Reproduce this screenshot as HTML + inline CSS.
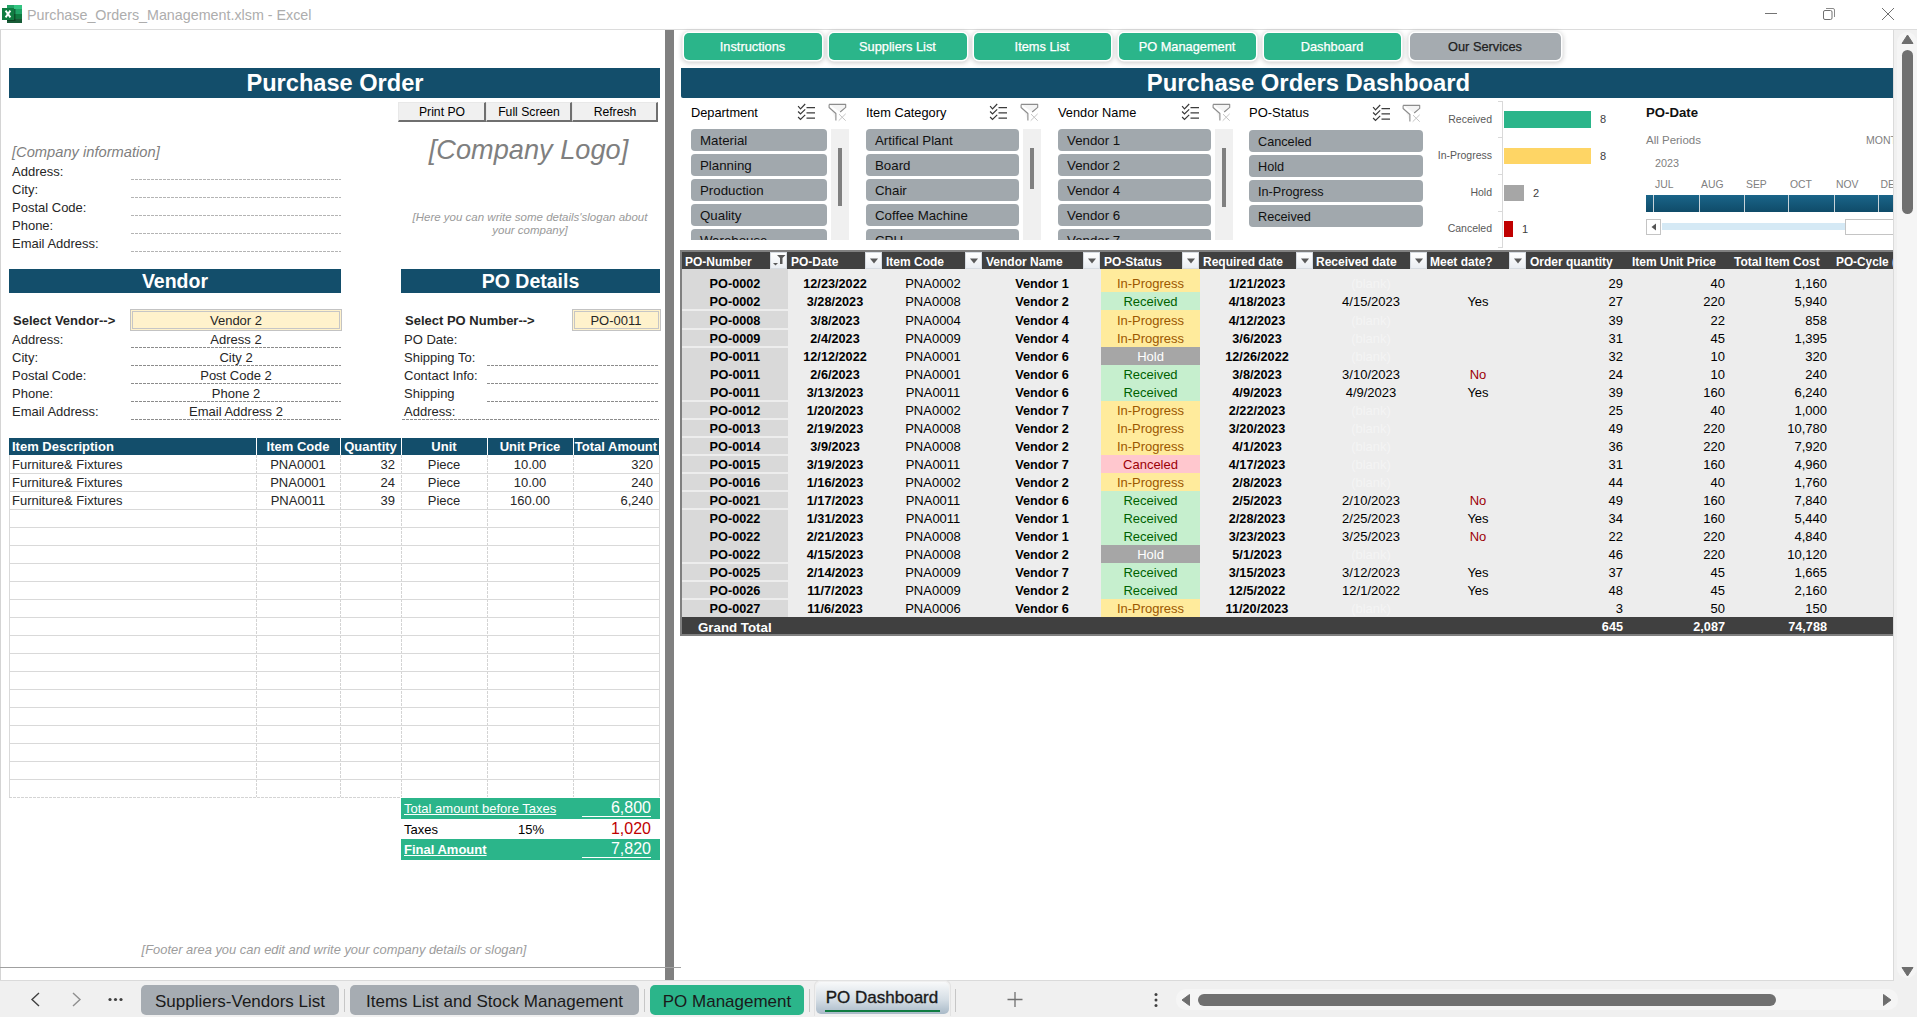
<!DOCTYPE html><html><head><meta charset="utf-8"><style>
*{margin:0;padding:0;box-sizing:border-box}
html,body{width:1917px;height:1017px;overflow:hidden;background:#fff;position:relative;font-family:"Liberation Sans",sans-serif}
.t{position:absolute;white-space:nowrap;overflow:visible}
</style></head><body>
<div style="position:absolute;left:0px;top:29px;width:1917px;height:1px;background:#dcdcdc"></div>
<svg style="position:absolute;left:2px;top:5px" width="21" height="19" viewBox="0 0 21 19">
<rect x="5" y="0" width="15" height="18" fill="#21a366"/>
<rect x="12" y="0" width="8" height="4" fill="#33c481"/>
<rect x="12" y="4" width="8" height="5" fill="#21a366"/>
<rect x="5" y="9" width="15" height="4.5" fill="#107c41"/>
<rect x="5" y="13.5" width="15" height="4.5" fill="#185c37"/>
<rect x="5" y="4" width="8.5" height="12" fill="#0a2e18" opacity="0.55"/>
<rect x="0" y="3" width="12" height="12" fill="#107c41"/>
<path d="M3.6 5.6 L8.4 12.4 M8.4 5.6 L3.6 12.4" stroke="#fff" stroke-width="1.9"/>
</svg>
<div class="t" style="left:27.00px;top:5.16px;width:600px;height:20px;line-height:20px;font-size:14.3px;color:#adadad;font-weight:normal;text-align:left;">Purchase_Orders_Management.xlsm - Excel</div>
<div style="position:absolute;left:1765px;top:13px;width:12px;height:1px;background:#747474"></div>
<svg style="position:absolute;left:1820px;top:6px" width="18" height="16" viewBox="0 0 18 16">
<rect x="3.5" y="4.5" width="8.5" height="9" rx="1.5" fill="none" stroke="#707070" stroke-width="1"/>
<path d="M6 2.5 H13 A1.5 1.5 0 0 1 14.5 4 V11" fill="none" stroke="#8a8a8a" stroke-width="1"/>
</svg>
<svg style="position:absolute;left:1880px;top:6px" width="16" height="16" viewBox="0 0 16 16">
<path d="M2 2 L14 14 M14 2 L2 14" stroke="#707070" stroke-width="1"/>
</svg>
<div style="position:absolute;left:0px;top:30px;width:1px;height:950px;background:#d4d4d4"></div>
<div style="position:absolute;left:665px;top:30px;width:9px;height:950px;background:#808080"></div>
<div style="position:absolute;left:0px;top:967px;width:681px;height:1px;background:#a0a0a0"></div>
<div style="position:absolute;left:674px;top:967px;width:7px;height:1px;background:#a0a0a0"></div>
<div style="position:absolute;left:1893px;top:30px;width:1px;height:951px;background:#dadada"></div>
<div style="position:absolute;left:0px;top:980px;width:1894px;height:1px;background:#dadada"></div>
<div style="position:absolute;left:1894px;top:30px;width:23px;height:951px;background:#f0f0f0"></div>
<div style="position:absolute;left:1897px;top:32px;width:20px;height:946px;background:#f5f5f5;border-radius:10px"></div>
<svg style="position:absolute;left:1900px;top:33px" width="15" height="12" viewBox="0 0 15 12"><path d="M7.5 2 L13 10.5 H2 Z" fill="#6e6e6e" stroke="#6e6e6e" stroke-width="1" stroke-linejoin="round"/></svg>
<div style="position:absolute;left:1902px;top:50px;width:11px;height:164px;background:#707070;border-radius:6px"></div>
<svg style="position:absolute;left:1900px;top:966px" width="15" height="12" viewBox="0 0 15 12"><path d="M7.5 10 L13 1.5 H2 Z" fill="#6e6e6e" stroke="#6e6e6e" stroke-width="1" stroke-linejoin="round"/></svg>
<div style="position:absolute;left:0px;top:981px;width:1917px;height:36px;background:#f0f0f0"></div>
<svg style="position:absolute;left:28px;top:990px" width="100" height="20" viewBox="0 0 100 20">
<path d="M11 3 L4 9.5 L11 16" stroke="#404040" stroke-width="1.4" fill="none"/>
<path d="M45 3 L52 9.5 L45 16" stroke="#8f8f8f" stroke-width="1.4" fill="none"/>
<circle cx="82" cy="9.5" r="1.6" fill="#404040"/><circle cx="87.5" cy="9.5" r="1.6" fill="#404040"/><circle cx="93" cy="9.5" r="1.6" fill="#404040"/>
</svg>
<div style="position:absolute;left:141px;top:985px;width:198px;height:30px;background:#a6acb2;border-radius:5px"></div>
<div class="t" style="left:121.00px;top:990.00px;width:238px;height:23px;line-height:23px;font-size:17px;color:#1a1a1a;font-weight:normal;text-align:center;">Suppliers-Vendors List</div>
<div style="position:absolute;left:344px;top:989px;width:1px;height:23px;background:#c6c6c6"></div>
<div style="position:absolute;left:350px;top:985px;width:289px;height:30px;background:#a6acb2;border-radius:5px"></div>
<div class="t" style="left:330.00px;top:990.00px;width:329px;height:23px;line-height:23px;font-size:17px;color:#1a1a1a;font-weight:normal;text-align:center;">Items List and Stock Management</div>
<div style="position:absolute;left:644px;top:989px;width:1px;height:23px;background:#c6c6c6"></div>
<div style="position:absolute;left:650px;top:985px;width:154px;height:30px;background:#2bb58a;border-radius:5px"></div>
<div class="t" style="left:630.00px;top:990.00px;width:194px;height:23px;line-height:23px;font-size:17px;color:#1a1a1a;font-weight:normal;text-align:center;">PO Management</div>
<div style="position:absolute;left:809px;top:989px;width:1px;height:23px;background:#c6c6c6"></div>
<div style="position:absolute;left:814px;top:980px;width:137px;height:36px;background:#f0f0f0;border:1px solid #e2e2e2;border-bottom:none;border-radius:6px 6px 0 0"></div>
<div style="position:absolute;left:816px;top:982px;width:133px;height:32px;background:linear-gradient(#f8f9fa,#d5dee5 55%,#a9bac8);border-radius:5px"></div>
<div class="t" style="left:802.00px;top:986.20px;width:160px;height:23px;line-height:23px;font-size:17px;color:#1a1a1a;font-weight:normal;text-align:center;-webkit-text-stroke:0.35px #1a1a1a">PO Dashboard</div>
<div style="position:absolute;left:825px;top:1010px;width:115px;height:2px;background:#107c41"></div>
<div style="position:absolute;left:955px;top:989px;width:1px;height:23px;background:#c6c6c6"></div>
<svg style="position:absolute;left:1005px;top:990px" width="20" height="20" viewBox="0 0 20 20"><path d="M10 2 V17 M2.5 9.5 H17.5" stroke="#707070" stroke-width="1.3"/></svg>
<svg style="position:absolute;left:1150px;top:990px" width="12" height="20" viewBox="0 0 12 20"><circle cx="6" cy="4.5" r="1.5" fill="#404040"/><circle cx="6" cy="10" r="1.5" fill="#404040"/><circle cx="6" cy="15.5" r="1.5" fill="#404040"/></svg>
<div style="position:absolute;left:1176px;top:989px;width:722px;height:21px;background:#f5f5f5;border-radius:10px"></div>
<svg style="position:absolute;left:1178px;top:992px" width="16" height="16" viewBox="0 0 16 16"><path d="M4 8 L11.5 2.5 V13.5 Z" fill="#6e6e6e" stroke="#6e6e6e" stroke-width="1" stroke-linejoin="round"/></svg>
<div style="position:absolute;left:1198px;top:994px;width:578px;height:12px;background:#707070;border-radius:6px"></div>
<svg style="position:absolute;left:1879px;top:992px" width="16" height="16" viewBox="0 0 16 16"><path d="M12 8 L4.5 2.5 V13.5 Z" fill="#6e6e6e" stroke="#6e6e6e" stroke-width="1" stroke-linejoin="round"/></svg>
<div style="position:absolute;left:9px;top:68px;width:651px;height:30px;background:#134e6b"></div>
<div class="t" style="left:9.50px;top:66.87px;width:651px;height:33px;line-height:33px;font-size:23.6px;color:#fff;font-weight:bold;text-align:center;">Purchase Order</div>
<div style="position:absolute;left:398px;top:102px;width:88px;height:20px;background:#f0f0f0;border-right:2px solid #6f6f6f;border-bottom:2px solid #6f6f6f;border-left:1px solid #e8e8e8;border-top:1px solid #e8e8e8"></div>
<div class="t" style="left:398.00px;top:104.14px;width:88px;height:17px;line-height:17px;font-size:12.2px;color:#000;font-weight:normal;text-align:center;">Print PO</div>
<div style="position:absolute;left:486px;top:102px;width:86px;height:20px;background:#f0f0f0;border-right:2px solid #6f6f6f;border-bottom:2px solid #6f6f6f;border-left:1px solid #e8e8e8;border-top:1px solid #e8e8e8"></div>
<div class="t" style="left:486.00px;top:104.14px;width:86px;height:17px;line-height:17px;font-size:12.2px;color:#000;font-weight:normal;text-align:center;">Full Screen</div>
<div style="position:absolute;left:572px;top:102px;width:86px;height:20px;background:#f0f0f0;border-right:2px solid #6f6f6f;border-bottom:2px solid #6f6f6f;border-left:1px solid #e8e8e8;border-top:1px solid #e8e8e8"></div>
<div class="t" style="left:572.00px;top:104.14px;width:86px;height:17px;line-height:17px;font-size:12.2px;color:#000;font-weight:normal;text-align:center;">Refresh</div>
<div class="t" style="left:12.00px;top:142.17px;width:400px;height:20px;line-height:20px;font-size:14.7px;color:#7f7f7f;font-weight:normal;text-align:left;font-style:italic">[Company information]</div>
<div class="t" style="left:12.00px;top:162.95px;width:400px;height:18px;line-height:18px;font-size:13px;color:#262626;font-weight:normal;text-align:left;">Address:</div>
<div style="position:absolute;left:131px;top:179px;width:210px;height:1px;background:repeating-linear-gradient(90deg,#b4b4b4 0 3px,transparent 3px 4px)"></div>
<div class="t" style="left:12.00px;top:180.95px;width:400px;height:18px;line-height:18px;font-size:13px;color:#262626;font-weight:normal;text-align:left;">City:</div>
<div style="position:absolute;left:131px;top:197px;width:210px;height:1px;background:repeating-linear-gradient(90deg,#b4b4b4 0 3px,transparent 3px 4px)"></div>
<div class="t" style="left:12.00px;top:198.95px;width:400px;height:18px;line-height:18px;font-size:13px;color:#262626;font-weight:normal;text-align:left;">Postal Code:</div>
<div style="position:absolute;left:131px;top:215px;width:210px;height:1px;background:repeating-linear-gradient(90deg,#b4b4b4 0 3px,transparent 3px 4px)"></div>
<div class="t" style="left:12.00px;top:216.95px;width:400px;height:18px;line-height:18px;font-size:13px;color:#262626;font-weight:normal;text-align:left;">Phone:</div>
<div style="position:absolute;left:131px;top:233px;width:210px;height:1px;background:repeating-linear-gradient(90deg,#b4b4b4 0 3px,transparent 3px 4px)"></div>
<div class="t" style="left:12.00px;top:234.95px;width:400px;height:18px;line-height:18px;font-size:13px;color:#262626;font-weight:normal;text-align:left;">Email Address:</div>
<div style="position:absolute;left:131px;top:251px;width:210px;height:1px;background:repeating-linear-gradient(90deg,#b4b4b4 0 3px,transparent 3px 4px)"></div>
<div class="t" style="left:378.50px;top:131.11px;width:300px;height:38px;line-height:38px;font-size:27.2px;color:#7f7f7f;font-weight:normal;text-align:center;font-style:italic">[Company Logo]</div>
<div class="t" style="left:380.00px;top:208.83px;width:300px;height:16px;line-height:16px;font-size:11.5px;color:#9a9a9a;font-weight:normal;text-align:center;font-style:italic;letter-spacing:0px">[Here you can write some details'slogan about</div>
<div class="t" style="left:380.00px;top:222.43px;width:300px;height:16px;line-height:16px;font-size:11.5px;color:#9a9a9a;font-weight:normal;text-align:center;font-style:italic;letter-spacing:0px">your company]</div>
<div style="position:absolute;left:9px;top:269px;width:332px;height:24px;background:#134e6b"></div>
<div class="t" style="left:9.00px;top:268.22px;width:332px;height:27px;line-height:27px;font-size:19.5px;color:#fff;font-weight:bold;text-align:center;">Vendor</div>
<div style="position:absolute;left:401px;top:269px;width:259px;height:24px;background:#134e6b"></div>
<div class="t" style="left:401.00px;top:268.22px;width:259px;height:27px;line-height:27px;font-size:19.5px;color:#fff;font-weight:bold;text-align:center;">PO Details</div>
<div class="t" style="left:13.00px;top:311.65px;width:400px;height:18px;line-height:18px;font-size:13px;color:#262626;font-weight:bold;text-align:left;">Select Vendor--&gt;</div>
<div style="position:absolute;left:130px;top:309px;width:212px;height:22px;background:#fff2cc;border:1px solid #c3c3c3;box-shadow:inset 0 0 0 1px #fff2cc, inset 0 0 0 2px #c6c6c6"></div>
<div class="t" style="left:136.00px;top:311.65px;width:200px;height:18px;line-height:18px;font-size:13px;color:#262626;font-weight:normal;text-align:center;">Vendor 2</div>
<div class="t" style="left:12.00px;top:330.65px;width:400px;height:18px;line-height:18px;font-size:13px;color:#262626;font-weight:normal;text-align:left;">Address:</div>
<div class="t" style="left:131.00px;top:330.65px;width:210px;height:18px;line-height:18px;font-size:13px;color:#262626;font-weight:normal;text-align:center;">Adress 2</div>
<div style="position:absolute;left:131px;top:347px;width:210px;height:1px;background:repeating-linear-gradient(90deg,#8c8c8c 0 3px,transparent 3px 4px)"></div>
<div class="t" style="left:12.00px;top:348.65px;width:400px;height:18px;line-height:18px;font-size:13px;color:#262626;font-weight:normal;text-align:left;">City:</div>
<div class="t" style="left:131.00px;top:348.65px;width:210px;height:18px;line-height:18px;font-size:13px;color:#262626;font-weight:normal;text-align:center;">City 2</div>
<div style="position:absolute;left:131px;top:365px;width:210px;height:1px;background:repeating-linear-gradient(90deg,#8c8c8c 0 3px,transparent 3px 4px)"></div>
<div class="t" style="left:12.00px;top:366.65px;width:400px;height:18px;line-height:18px;font-size:13px;color:#262626;font-weight:normal;text-align:left;">Postal Code:</div>
<div class="t" style="left:131.00px;top:366.65px;width:210px;height:18px;line-height:18px;font-size:13px;color:#262626;font-weight:normal;text-align:center;">Post Code 2</div>
<div style="position:absolute;left:131px;top:383px;width:210px;height:1px;background:repeating-linear-gradient(90deg,#8c8c8c 0 3px,transparent 3px 4px)"></div>
<div class="t" style="left:12.00px;top:384.65px;width:400px;height:18px;line-height:18px;font-size:13px;color:#262626;font-weight:normal;text-align:left;">Phone:</div>
<div class="t" style="left:131.00px;top:384.65px;width:210px;height:18px;line-height:18px;font-size:13px;color:#262626;font-weight:normal;text-align:center;">Phone 2</div>
<div style="position:absolute;left:131px;top:401px;width:210px;height:1px;background:repeating-linear-gradient(90deg,#8c8c8c 0 3px,transparent 3px 4px)"></div>
<div class="t" style="left:12.00px;top:402.65px;width:400px;height:18px;line-height:18px;font-size:13px;color:#262626;font-weight:normal;text-align:left;">Email Address:</div>
<div class="t" style="left:131.00px;top:402.65px;width:210px;height:18px;line-height:18px;font-size:13px;color:#262626;font-weight:normal;text-align:center;">Email Address 2</div>
<div style="position:absolute;left:131px;top:419px;width:210px;height:1px;background:repeating-linear-gradient(90deg,#8c8c8c 0 3px,transparent 3px 4px)"></div>
<div class="t" style="left:405.00px;top:311.65px;width:400px;height:18px;line-height:18px;font-size:13px;color:#262626;font-weight:bold;text-align:left;">Select PO Number--&gt;</div>
<div style="position:absolute;left:572px;top:309px;width:89px;height:22px;background:#fff2cc;border:1px solid #c3c3c3;box-shadow:inset 0 0 0 1px #fff2cc, inset 0 0 0 2px #c6c6c6"></div>
<div class="t" style="left:572.00px;top:311.65px;width:88px;height:18px;line-height:18px;font-size:13px;color:#262626;font-weight:normal;text-align:center;">PO-0011</div>
<div class="t" style="left:404.00px;top:330.65px;width:400px;height:18px;line-height:18px;font-size:13px;color:#262626;font-weight:normal;text-align:left;">PO Date:</div>
<div class="t" style="left:404.00px;top:348.65px;width:400px;height:18px;line-height:18px;font-size:13px;color:#262626;font-weight:normal;text-align:left;">Shipping To:</div>
<div class="t" style="left:404.00px;top:366.65px;width:400px;height:18px;line-height:18px;font-size:13px;color:#262626;font-weight:normal;text-align:left;">Contact Info:</div>
<div class="t" style="left:404.00px;top:384.65px;width:400px;height:18px;line-height:18px;font-size:13px;color:#262626;font-weight:normal;text-align:left;">Shipping</div>
<div class="t" style="left:404.00px;top:402.65px;width:400px;height:18px;line-height:18px;font-size:13px;color:#262626;font-weight:normal;text-align:left;">Address:</div>
<div style="position:absolute;left:487px;top:365px;width:172px;height:1px;background:repeating-linear-gradient(90deg,#8c8c8c 0 3px,transparent 3px 4px)"></div>
<div style="position:absolute;left:487px;top:383px;width:172px;height:1px;background:repeating-linear-gradient(90deg,#8c8c8c 0 3px,transparent 3px 4px)"></div>
<div style="position:absolute;left:487px;top:401px;width:172px;height:1px;background:repeating-linear-gradient(90deg,#8c8c8c 0 3px,transparent 3px 4px)"></div>
<div style="position:absolute;left:402px;top:419px;width:257px;height:1px;background:repeating-linear-gradient(90deg,#8c8c8c 0 3px,transparent 3px 4px)"></div>
<div style="position:absolute;left:9px;top:438px;width:650px;height:17px;background:#134e6b"></div>
<div style="position:absolute;left:256px;top:438px;width:1px;height:17px;background:#ffffff"></div>
<div style="position:absolute;left:340px;top:438px;width:1px;height:17px;background:#ffffff"></div>
<div style="position:absolute;left:401px;top:438px;width:1px;height:17px;background:#ffffff"></div>
<div style="position:absolute;left:487px;top:438px;width:1px;height:17px;background:#ffffff"></div>
<div style="position:absolute;left:573px;top:438px;width:1px;height:17px;background:#ffffff"></div>
<div class="t" style="left:12.00px;top:438.15px;width:400px;height:18px;line-height:18px;font-size:13px;color:#fff;font-weight:bold;text-align:left;">Item Description</div>
<div class="t" style="left:251.00px;top:438.15px;width:94px;height:18px;line-height:18px;font-size:13px;color:#fff;font-weight:bold;text-align:center;">Item Code</div>
<div class="t" style="left:335.00px;top:438.15px;width:71px;height:18px;line-height:18px;font-size:13px;color:#fff;font-weight:bold;text-align:center;">Quantity</div>
<div class="t" style="left:396.00px;top:438.15px;width:96px;height:18px;line-height:18px;font-size:13px;color:#fff;font-weight:bold;text-align:center;">Unit</div>
<div class="t" style="left:482.00px;top:438.15px;width:96px;height:18px;line-height:18px;font-size:13px;color:#fff;font-weight:bold;text-align:center;">Unit Price</div>
<div class="t" style="left:568.00px;top:438.15px;width:96px;height:18px;line-height:18px;font-size:13px;color:#fff;font-weight:bold;text-align:center;">Total Amount</div>
<div style="position:absolute;left:9px;top:455px;width:1px;height:342px;background:#d9d9d9"></div>
<div style="position:absolute;left:659px;top:455px;width:1px;height:342px;background:#d9d9d9"></div>
<div style="position:absolute;left:256px;top:455px;width:1px;height:342px;background:repeating-linear-gradient(180deg,#d4d4d4 0 3px,transparent 3px 4px)"></div>
<div style="position:absolute;left:340px;top:455px;width:1px;height:342px;background:repeating-linear-gradient(180deg,#d4d4d4 0 3px,transparent 3px 4px)"></div>
<div style="position:absolute;left:401px;top:455px;width:1px;height:342px;background:repeating-linear-gradient(180deg,#d4d4d4 0 3px,transparent 3px 4px)"></div>
<div style="position:absolute;left:487px;top:455px;width:1px;height:342px;background:repeating-linear-gradient(180deg,#d4d4d4 0 3px,transparent 3px 4px)"></div>
<div style="position:absolute;left:573px;top:455px;width:1px;height:342px;background:repeating-linear-gradient(180deg,#d4d4d4 0 3px,transparent 3px 4px)"></div>
<div style="position:absolute;left:9px;top:473px;width:650px;height:1px;background:#d9d9d9"></div>
<div style="position:absolute;left:9px;top:491px;width:650px;height:1px;background:#d9d9d9"></div>
<div style="position:absolute;left:9px;top:509px;width:650px;height:1px;background:#d9d9d9"></div>
<div style="position:absolute;left:9px;top:527px;width:650px;height:1px;background:#d9d9d9"></div>
<div style="position:absolute;left:9px;top:545px;width:650px;height:1px;background:#d9d9d9"></div>
<div style="position:absolute;left:9px;top:563px;width:650px;height:1px;background:#d9d9d9"></div>
<div style="position:absolute;left:9px;top:581px;width:650px;height:1px;background:#d9d9d9"></div>
<div style="position:absolute;left:9px;top:599px;width:650px;height:1px;background:#d9d9d9"></div>
<div style="position:absolute;left:9px;top:617px;width:650px;height:1px;background:#d9d9d9"></div>
<div style="position:absolute;left:9px;top:635px;width:650px;height:1px;background:#d9d9d9"></div>
<div style="position:absolute;left:9px;top:653px;width:650px;height:1px;background:#d9d9d9"></div>
<div style="position:absolute;left:9px;top:671px;width:650px;height:1px;background:#d9d9d9"></div>
<div style="position:absolute;left:9px;top:689px;width:650px;height:1px;background:#d9d9d9"></div>
<div style="position:absolute;left:9px;top:707px;width:650px;height:1px;background:#d9d9d9"></div>
<div style="position:absolute;left:9px;top:725px;width:650px;height:1px;background:#d9d9d9"></div>
<div style="position:absolute;left:9px;top:743px;width:650px;height:1px;background:#d9d9d9"></div>
<div style="position:absolute;left:9px;top:761px;width:650px;height:1px;background:#d9d9d9"></div>
<div style="position:absolute;left:9px;top:779px;width:650px;height:1px;background:#d9d9d9"></div>
<div style="position:absolute;left:9px;top:797px;width:392px;height:1px;background:repeating-linear-gradient(90deg,#d4d4d4 0 3px,transparent 3px 4px)"></div>
<div class="t" style="left:12.00px;top:456.15px;width:400px;height:18px;line-height:18px;font-size:13px;color:#262626;font-weight:normal;text-align:left;">Furniture&amp; Fixtures</div>
<div class="t" style="left:256.00px;top:456.15px;width:84px;height:18px;line-height:18px;font-size:13px;color:#262626;font-weight:normal;text-align:center;">PNA0001</div>
<div class="t" style="left:335.00px;top:456.15px;width:60px;height:18px;line-height:18px;font-size:13px;color:#262626;font-weight:normal;text-align:right;">32</div>
<div class="t" style="left:401.00px;top:456.15px;width:86px;height:18px;line-height:18px;font-size:13px;color:#262626;font-weight:normal;text-align:center;">Piece</div>
<div class="t" style="left:487.00px;top:456.15px;width:86px;height:18px;line-height:18px;font-size:13px;color:#262626;font-weight:normal;text-align:center;">10.00</div>
<div class="t" style="left:573.00px;top:456.15px;width:80px;height:18px;line-height:18px;font-size:13px;color:#262626;font-weight:normal;text-align:right;">320</div>
<div class="t" style="left:12.00px;top:474.15px;width:400px;height:18px;line-height:18px;font-size:13px;color:#262626;font-weight:normal;text-align:left;">Furniture&amp; Fixtures</div>
<div class="t" style="left:256.00px;top:474.15px;width:84px;height:18px;line-height:18px;font-size:13px;color:#262626;font-weight:normal;text-align:center;">PNA0001</div>
<div class="t" style="left:335.00px;top:474.15px;width:60px;height:18px;line-height:18px;font-size:13px;color:#262626;font-weight:normal;text-align:right;">24</div>
<div class="t" style="left:401.00px;top:474.15px;width:86px;height:18px;line-height:18px;font-size:13px;color:#262626;font-weight:normal;text-align:center;">Piece</div>
<div class="t" style="left:487.00px;top:474.15px;width:86px;height:18px;line-height:18px;font-size:13px;color:#262626;font-weight:normal;text-align:center;">10.00</div>
<div class="t" style="left:573.00px;top:474.15px;width:80px;height:18px;line-height:18px;font-size:13px;color:#262626;font-weight:normal;text-align:right;">240</div>
<div class="t" style="left:12.00px;top:492.15px;width:400px;height:18px;line-height:18px;font-size:13px;color:#262626;font-weight:normal;text-align:left;">Furniture&amp; Fixtures</div>
<div class="t" style="left:256.00px;top:492.15px;width:84px;height:18px;line-height:18px;font-size:13px;color:#262626;font-weight:normal;text-align:center;">PNA0011</div>
<div class="t" style="left:335.00px;top:492.15px;width:60px;height:18px;line-height:18px;font-size:13px;color:#262626;font-weight:normal;text-align:right;">39</div>
<div class="t" style="left:401.00px;top:492.15px;width:86px;height:18px;line-height:18px;font-size:13px;color:#262626;font-weight:normal;text-align:center;">Piece</div>
<div class="t" style="left:487.00px;top:492.15px;width:86px;height:18px;line-height:18px;font-size:13px;color:#262626;font-weight:normal;text-align:center;">160.00</div>
<div class="t" style="left:573.00px;top:492.15px;width:80px;height:18px;line-height:18px;font-size:13px;color:#262626;font-weight:normal;text-align:right;">6,240</div>
<div style="position:absolute;left:401px;top:798px;width:259px;height:21px;background:#2bb58a"></div>
<div class="t" style="left:404.00px;top:799.65px;width:400px;height:18px;line-height:18px;font-size:13px;color:#fff;font-weight:normal;text-align:left;text-decoration:underline">Total amount before Taxes</div>
<div class="t" style="left:551.00px;top:796.68px;width:100px;height:22px;line-height:22px;font-size:16px;color:#fff;font-weight:normal;text-align:right;">6,800</div>
<div style="position:absolute;left:582px;top:816px;width:69px;height:1px;background:#fff"></div>
<div class="t" style="left:404.00px;top:820.65px;width:400px;height:18px;line-height:18px;font-size:13px;color:#000;font-weight:normal;text-align:left;">Taxes</div>
<div class="t" style="left:491.00px;top:820.65px;width:80px;height:18px;line-height:18px;font-size:13px;color:#000;font-weight:normal;text-align:center;">15%</div>
<div class="t" style="left:551.00px;top:818.18px;width:100px;height:22px;line-height:22px;font-size:16px;color:#c00000;font-weight:normal;text-align:right;">1,020</div>
<div style="position:absolute;left:401px;top:839px;width:259px;height:21px;background:#2bb58a"></div>
<div class="t" style="left:404.00px;top:841.15px;width:400px;height:18px;line-height:18px;font-size:13px;color:#fff;font-weight:bold;text-align:left;text-decoration:underline">Final Amount</div>
<div class="t" style="left:551.00px;top:838.18px;width:100px;height:22px;line-height:22px;font-size:16px;color:#fff;font-weight:normal;text-align:right;">7,820</div>
<div style="position:absolute;left:582px;top:857px;width:69px;height:1px;background:#fff"></div>
<div class="t" style="left:74.00px;top:940.65px;width:520px;height:18px;line-height:18px;font-size:12.9px;color:#9c9c9c;font-weight:normal;text-align:center;font-style:italic">[Footer area you can edit and write your company details or slogan]</div>
<div style="position:absolute;left:684px;top:33px;width:138px;height:27px;background:#2bb58a;border-radius:5px;box-shadow:0 0 0 1.5px #fff, 0 1px 5px 2px rgba(0,0,0,0.2)"></div>
<div class="t" style="left:683.00px;top:37.75px;width:139px;height:17px;line-height:17px;font-size:12.8px;color:#fff;font-weight:normal;text-align:center;-webkit-text-stroke:0.25px #fff">Instructions</div>
<div style="position:absolute;left:829px;top:33px;width:138px;height:27px;background:#2bb58a;border-radius:5px;box-shadow:0 0 0 1.5px #fff, 0 1px 5px 2px rgba(0,0,0,0.2)"></div>
<div class="t" style="left:828.00px;top:37.75px;width:139px;height:17px;line-height:17px;font-size:12.8px;color:#fff;font-weight:normal;text-align:center;-webkit-text-stroke:0.25px #fff">Suppliers List</div>
<div style="position:absolute;left:974px;top:33px;width:137px;height:27px;background:#2bb58a;border-radius:5px;box-shadow:0 0 0 1.5px #fff, 0 1px 5px 2px rgba(0,0,0,0.2)"></div>
<div class="t" style="left:973.00px;top:37.75px;width:138px;height:17px;line-height:17px;font-size:12.8px;color:#fff;font-weight:normal;text-align:center;-webkit-text-stroke:0.25px #fff">Items List</div>
<div style="position:absolute;left:1119px;top:33px;width:137px;height:27px;background:#2bb58a;border-radius:5px;box-shadow:0 0 0 1.5px #fff, 0 1px 5px 2px rgba(0,0,0,0.2)"></div>
<div class="t" style="left:1118.00px;top:37.75px;width:138px;height:17px;line-height:17px;font-size:12.8px;color:#fff;font-weight:normal;text-align:center;-webkit-text-stroke:0.25px #fff">PO Management</div>
<div style="position:absolute;left:1264px;top:33px;width:137px;height:27px;background:#2bb58a;border-radius:5px;box-shadow:0 0 0 1.5px #fff, 0 1px 5px 2px rgba(0,0,0,0.2)"></div>
<div class="t" style="left:1263.00px;top:37.75px;width:138px;height:17px;line-height:17px;font-size:12.8px;color:#fff;font-weight:normal;text-align:center;-webkit-text-stroke:0.25px #fff">Dashboard</div>
<div style="position:absolute;left:1410px;top:33px;width:151px;height:27px;background:#a5abb0;border-radius:5px;box-shadow:0 0 0 1.5px #fff, 0 1px 5px 2px rgba(0,0,0,0.2)"></div>
<div class="t" style="left:1409.00px;top:37.75px;width:152px;height:17px;line-height:17px;font-size:12.8px;color:#1e1e1e;font-weight:normal;text-align:center;-webkit-text-stroke:0.25px #1e1e1e">Our Services</div>
<div style="position:absolute;left:681px;top:68px;width:1212px;height:30px;background:#134e6b;border-radius:0 0 0 2px"></div>
<div class="t" style="left:1008.50px;top:66.27px;width:600px;height:33px;line-height:33px;font-size:23.85px;color:#fff;font-weight:bold;text-align:center;">Purchase Orders Dashboard</div>
<div class="t" style="left:691.00px;top:103.95px;width:400px;height:17px;line-height:17px;font-size:12.8px;color:#000;font-weight:normal;text-align:left;">Department</div>
<svg style="position:absolute;left:797px;top:103px" width="20" height="19" viewBox="0 0 20 19">
<path d="M1.1 3.2 L3.5 5.8 L8.2 1 M1.1 8.5 L3.5 11 L8.2 6.3 M1.1 14 L3.5 16.5 L8.2 11.8" stroke="#383838" stroke-width="1.2" fill="none"/>
<path d="M9.5 4.5 H18 M9.5 9.8 H18 M9.5 15.2 H18" stroke="#3c3c3c" stroke-width="1.25"/>
</svg>
<svg style="position:absolute;left:828px;top:103px" width="20" height="19" viewBox="0 0 20 19">
<path d="M1.1 1.4 H17.7 V4.4 L12.2 9 M1.1 1.4 V4.5 L7.9 10.5 V17.5" stroke="#8c8c8c" stroke-width="1.1" fill="#f4f4f4" stroke-linejoin="round"/>
<path d="M11 11.1 L17.7 17.7 M17.7 10.8 L10.7 17.7" stroke="#c4c4c4" stroke-width="1"/>
</svg>
<div style="position:absolute;left:691px;top:129px;width:136px;height:111px;overflow:hidden">
<div style="position:absolute;left:0;top:0px;width:136px;height:22px;background:#a1a8ad;border-radius:4px"></div>
<div class="t" style="left:9px;top:0.5px;height:22px;line-height:22px;font-size:13.3px;color:#111">Material</div>
<div style="position:absolute;left:0;top:25px;width:136px;height:22px;background:#a1a8ad;border-radius:4px"></div>
<div class="t" style="left:9px;top:25.5px;height:22px;line-height:22px;font-size:13.3px;color:#111">Planning</div>
<div style="position:absolute;left:0;top:50px;width:136px;height:22px;background:#a1a8ad;border-radius:4px"></div>
<div class="t" style="left:9px;top:50.5px;height:22px;line-height:22px;font-size:13.3px;color:#111">Production</div>
<div style="position:absolute;left:0;top:75px;width:136px;height:22px;background:#a1a8ad;border-radius:4px"></div>
<div class="t" style="left:9px;top:75.5px;height:22px;line-height:22px;font-size:13.3px;color:#111">Quality</div>
<div style="position:absolute;left:0;top:100px;width:136px;height:22px;background:#a1a8ad;border-radius:4px"></div>
<div class="t" style="left:9px;top:100.5px;height:22px;line-height:22px;font-size:13.3px;color:#111">Warehouse</div>
</div>
<div style="position:absolute;left:831px;top:129px;width:18px;height:111px;background:#f0f0f0"></div>
<div style="position:absolute;left:838.0px;top:148px;width:4px;height:58px;background:#808080"></div>
<div class="t" style="left:866.00px;top:103.95px;width:400px;height:17px;line-height:17px;font-size:12.8px;color:#000;font-weight:normal;text-align:left;">Item Category</div>
<svg style="position:absolute;left:989px;top:103px" width="20" height="19" viewBox="0 0 20 19">
<path d="M1.1 3.2 L3.5 5.8 L8.2 1 M1.1 8.5 L3.5 11 L8.2 6.3 M1.1 14 L3.5 16.5 L8.2 11.8" stroke="#383838" stroke-width="1.2" fill="none"/>
<path d="M9.5 4.5 H18 M9.5 9.8 H18 M9.5 15.2 H18" stroke="#3c3c3c" stroke-width="1.25"/>
</svg>
<svg style="position:absolute;left:1020px;top:103px" width="20" height="19" viewBox="0 0 20 19">
<path d="M1.1 1.4 H17.7 V4.4 L12.2 9 M1.1 1.4 V4.5 L7.9 10.5 V17.5" stroke="#8c8c8c" stroke-width="1.1" fill="#f4f4f4" stroke-linejoin="round"/>
<path d="M11 11.1 L17.7 17.7 M17.7 10.8 L10.7 17.7" stroke="#c4c4c4" stroke-width="1"/>
</svg>
<div style="position:absolute;left:866px;top:129px;width:153px;height:111px;overflow:hidden">
<div style="position:absolute;left:0;top:0px;width:153px;height:22px;background:#a1a8ad;border-radius:4px"></div>
<div class="t" style="left:9px;top:0.5px;height:22px;line-height:22px;font-size:13.3px;color:#111">Artifical Plant</div>
<div style="position:absolute;left:0;top:25px;width:153px;height:22px;background:#a1a8ad;border-radius:4px"></div>
<div class="t" style="left:9px;top:25.5px;height:22px;line-height:22px;font-size:13.3px;color:#111">Board</div>
<div style="position:absolute;left:0;top:50px;width:153px;height:22px;background:#a1a8ad;border-radius:4px"></div>
<div class="t" style="left:9px;top:50.5px;height:22px;line-height:22px;font-size:13.3px;color:#111">Chair</div>
<div style="position:absolute;left:0;top:75px;width:153px;height:22px;background:#a1a8ad;border-radius:4px"></div>
<div class="t" style="left:9px;top:75.5px;height:22px;line-height:22px;font-size:13.3px;color:#111">Coffee Machine</div>
<div style="position:absolute;left:0;top:100px;width:153px;height:22px;background:#a1a8ad;border-radius:4px"></div>
<div class="t" style="left:9px;top:100.5px;height:22px;line-height:22px;font-size:13.3px;color:#111">CPU</div>
</div>
<div style="position:absolute;left:1023px;top:129px;width:18px;height:111px;background:#f0f0f0"></div>
<div style="position:absolute;left:1030.0px;top:148px;width:4px;height:41px;background:#808080"></div>
<div class="t" style="left:1058.00px;top:103.95px;width:400px;height:17px;line-height:17px;font-size:12.8px;color:#000;font-weight:normal;text-align:left;">Vendor Name</div>
<svg style="position:absolute;left:1181px;top:103px" width="20" height="19" viewBox="0 0 20 19">
<path d="M1.1 3.2 L3.5 5.8 L8.2 1 M1.1 8.5 L3.5 11 L8.2 6.3 M1.1 14 L3.5 16.5 L8.2 11.8" stroke="#383838" stroke-width="1.2" fill="none"/>
<path d="M9.5 4.5 H18 M9.5 9.8 H18 M9.5 15.2 H18" stroke="#3c3c3c" stroke-width="1.25"/>
</svg>
<svg style="position:absolute;left:1212px;top:103px" width="20" height="19" viewBox="0 0 20 19">
<path d="M1.1 1.4 H17.7 V4.4 L12.2 9 M1.1 1.4 V4.5 L7.9 10.5 V17.5" stroke="#8c8c8c" stroke-width="1.1" fill="#f4f4f4" stroke-linejoin="round"/>
<path d="M11 11.1 L17.7 17.7 M17.7 10.8 L10.7 17.7" stroke="#c4c4c4" stroke-width="1"/>
</svg>
<div style="position:absolute;left:1058px;top:129px;width:153px;height:111px;overflow:hidden">
<div style="position:absolute;left:0;top:0px;width:153px;height:22px;background:#a1a8ad;border-radius:4px"></div>
<div class="t" style="left:9px;top:0.5px;height:22px;line-height:22px;font-size:13.3px;color:#111">Vendor 1</div>
<div style="position:absolute;left:0;top:25px;width:153px;height:22px;background:#a1a8ad;border-radius:4px"></div>
<div class="t" style="left:9px;top:25.5px;height:22px;line-height:22px;font-size:13.3px;color:#111">Vendor 2</div>
<div style="position:absolute;left:0;top:50px;width:153px;height:22px;background:#a1a8ad;border-radius:4px"></div>
<div class="t" style="left:9px;top:50.5px;height:22px;line-height:22px;font-size:13.3px;color:#111">Vendor 4</div>
<div style="position:absolute;left:0;top:75px;width:153px;height:22px;background:#a1a8ad;border-radius:4px"></div>
<div class="t" style="left:9px;top:75.5px;height:22px;line-height:22px;font-size:13.3px;color:#111">Vendor 6</div>
<div style="position:absolute;left:0;top:100px;width:153px;height:22px;background:#a1a8ad;border-radius:4px"></div>
<div class="t" style="left:9px;top:100.5px;height:22px;line-height:22px;font-size:13.3px;color:#111">Vendor 7</div>
</div>
<div style="position:absolute;left:1215px;top:129px;width:18px;height:111px;background:#f0f0f0"></div>
<div style="position:absolute;left:1222.0px;top:148px;width:4px;height:59px;background:#808080"></div>
<div class="t" style="left:1249.00px;top:104.15px;width:400px;height:18px;line-height:18px;font-size:13px;color:#000;font-weight:normal;text-align:left;">PO-Status</div>
<svg style="position:absolute;left:1372px;top:104px" width="20" height="19" viewBox="0 0 20 19">
<path d="M1.1 3.2 L3.5 5.8 L8.2 1 M1.1 8.5 L3.5 11 L8.2 6.3 M1.1 14 L3.5 16.5 L8.2 11.8" stroke="#383838" stroke-width="1.2" fill="none"/>
<path d="M9.5 4.5 H18 M9.5 9.8 H18 M9.5 15.2 H18" stroke="#3c3c3c" stroke-width="1.25"/>
</svg>
<svg style="position:absolute;left:1402px;top:104px" width="20" height="19" viewBox="0 0 20 19">
<path d="M1.1 1.4 H17.7 V4.4 L12.2 9 M1.1 1.4 V4.5 L7.9 10.5 V17.5" stroke="#8c8c8c" stroke-width="1.1" fill="#f4f4f4" stroke-linejoin="round"/>
<path d="M11 11.1 L17.7 17.7 M17.7 10.8 L10.7 17.7" stroke="#c4c4c4" stroke-width="1"/>
</svg>
<div style="position:absolute;left:1249px;top:130px;width:174px;height:22px;background:#a1a8ad;border-radius:4px"></div>
<div class="t" style="left:1258px;top:131px;height:22px;line-height:22px;font-size:12.7px;color:#111">Canceled</div>
<div style="position:absolute;left:1249px;top:155px;width:174px;height:22px;background:#a1a8ad;border-radius:4px"></div>
<div class="t" style="left:1258px;top:156px;height:22px;line-height:22px;font-size:12.7px;color:#111">Hold</div>
<div style="position:absolute;left:1249px;top:180px;width:174px;height:22px;background:#a1a8ad;border-radius:4px"></div>
<div class="t" style="left:1258px;top:181px;height:22px;line-height:22px;font-size:12.7px;color:#111">In-Progress</div>
<div style="position:absolute;left:1249px;top:205px;width:174px;height:22px;background:#a1a8ad;border-radius:4px"></div>
<div class="t" style="left:1258px;top:206px;height:22px;line-height:22px;font-size:12.7px;color:#111">Received</div>
<div style="position:absolute;left:1502px;top:101px;width:1px;height:147px;background:#d9d9d9"></div>
<div style="position:absolute;left:1498px;top:101px;width:4px;height:1px;background:#d9d9d9"></div>
<div style="position:absolute;left:1498px;top:137px;width:4px;height:1px;background:#d9d9d9"></div>
<div style="position:absolute;left:1498px;top:174px;width:4px;height:1px;background:#d9d9d9"></div>
<div style="position:absolute;left:1498px;top:211px;width:4px;height:1px;background:#d9d9d9"></div>
<div style="position:absolute;left:1498px;top:247px;width:4px;height:1px;background:#d9d9d9"></div>
<div class="t" style="left:1412.00px;top:111.62px;width:80px;height:14px;line-height:14px;font-size:10.5px;color:#595959;font-weight:normal;text-align:right;">Received</div>
<div style="position:absolute;left:1504px;top:111px;width:87px;height:17px;background:#2bb58a"></div>
<div class="t" style="left:1600.00px;top:112.13px;width:400px;height:15px;line-height:15px;font-size:11px;color:#404040;font-weight:normal;text-align:left;">8</div>
<div class="t" style="left:1412.00px;top:148.12px;width:80px;height:14px;line-height:14px;font-size:10.5px;color:#595959;font-weight:normal;text-align:right;">In-Progress</div>
<div style="position:absolute;left:1504px;top:148px;width:87px;height:16px;background:#fed565"></div>
<div class="t" style="left:1600.00px;top:148.63px;width:400px;height:15px;line-height:15px;font-size:11px;color:#404040;font-weight:normal;text-align:left;">8</div>
<div class="t" style="left:1412.00px;top:185.12px;width:80px;height:14px;line-height:14px;font-size:10.5px;color:#595959;font-weight:normal;text-align:right;">Hold</div>
<div style="position:absolute;left:1504px;top:185px;width:20px;height:16px;background:#a6a6a6"></div>
<div class="t" style="left:1533.00px;top:185.63px;width:400px;height:15px;line-height:15px;font-size:11px;color:#404040;font-weight:normal;text-align:left;">2</div>
<div class="t" style="left:1412.00px;top:221.12px;width:80px;height:14px;line-height:14px;font-size:10.5px;color:#595959;font-weight:normal;text-align:right;">Canceled</div>
<div style="position:absolute;left:1504px;top:221px;width:9px;height:16px;background:#c00000"></div>
<div class="t" style="left:1522.00px;top:221.63px;width:400px;height:15px;line-height:15px;font-size:11px;color:#404040;font-weight:normal;text-align:left;">1</div>
<div class="t" style="left:1646.00px;top:103.65px;width:400px;height:18px;line-height:18px;font-size:13.2px;color:#111;font-weight:bold;text-align:left;">PO-Date</div>
<div class="t" style="left:1646.00px;top:131.83px;width:400px;height:16px;line-height:16px;font-size:11.5px;color:#808080;font-weight:normal;text-align:left;">All Periods</div>
<div style="position:absolute;left:1646px;top:100px;width:247px;height:145px;overflow:hidden">
<div class="t" style="left:220px;top:32px;height:16px;line-height:16px;font-size:10.5px;color:#808080">MONTHS</div>
<div class="t" style="left:9px;top:55px;height:16px;line-height:16px;font-size:10.8px;color:#808080">2023</div>
<div class="t" style="left:9px;top:76.8px;height:16px;line-height:16px;font-size:10.4px;color:#808080">JUL</div>
<div class="t" style="left:55px;top:76.8px;height:16px;line-height:16px;font-size:10.4px;color:#808080">AUG</div>
<div class="t" style="left:100px;top:76.8px;height:16px;line-height:16px;font-size:10.4px;color:#808080">SEP</div>
<div class="t" style="left:144px;top:76.8px;height:16px;line-height:16px;font-size:10.4px;color:#808080">OCT</div>
<div class="t" style="left:190px;top:76.8px;height:16px;line-height:16px;font-size:10.4px;color:#808080">NOV</div>
<div class="t" style="left:234.5px;top:76.8px;height:16px;line-height:16px;font-size:10.4px;color:#808080">DEC</div>
<div style="position:absolute;left:0;top:95px;width:247px;height:17px;background:linear-gradient(#1a6589,#0f4b69)"></div>
<div style="position:absolute;left:7px;top:95px;width:1px;height:17px;background:#c9d3d9"></div>
<div style="position:absolute;left:53px;top:95px;width:1px;height:17px;background:#c9d3d9"></div>
<div style="position:absolute;left:98px;top:95px;width:1px;height:17px;background:#c9d3d9"></div>
<div style="position:absolute;left:142px;top:95px;width:1px;height:17px;background:#c9d3d9"></div>
<div style="position:absolute;left:188px;top:95px;width:1px;height:17px;background:#c9d3d9"></div>
<div style="position:absolute;left:232px;top:95px;width:1px;height:17px;background:#c9d3d9"></div>
<div style="position:absolute;left:0;top:119px;width:15px;height:16px;background:#fff;border:1px solid #c4c4c4"></div>
<svg style="position:absolute;left:3px;top:122px" width="10" height="10" viewBox="0 0 10 10"><path d="M2.5 5 L7 1.5 V8.5 Z" fill="#555"/></svg>
<div style="position:absolute;left:16px;top:123px;width:183px;height:7px;background:#d5e9f5"></div>
<div style="position:absolute;left:199px;top:119px;width:60px;height:16px;background:#fff;border:1px solid #c4c4c4"></div>
</div>
<div style="position:absolute;left:680px;top:250px;width:1213px;height:2px;background:#808080"></div>
<div style="position:absolute;left:680px;top:250px;width:2px;height:385px;background:#808080"></div>
<div style="position:absolute;left:682px;top:252px;width:1211px;height:17px;background:#404040"></div>
<div style="position:absolute;left:682px;top:269px;width:1211px;height:348px;background:#ededed"></div>
<div class="t" style="left:685.00px;top:254.14px;width:400px;height:16px;line-height:16px;font-size:12px;color:#fff;font-weight:bold;text-align:left;">PO-Number</div>
<div style="position:absolute;left:770px;top:252px;width:17px;height:17px;background:linear-gradient(#ffffff,#e9edf2);border:1px solid #d6dbe1"></div>
<svg style="position:absolute;left:771px;top:253px" width="16" height="15" viewBox="0 0 16 15"><path d="M6 2 H14.5 L11.5 5 V11 H9 V5 Z" fill="#595959"/><path d="M2 10 H7 L4.5 12.5 Z" fill="#595959"/></svg>
<div class="t" style="left:791.00px;top:254.14px;width:400px;height:16px;line-height:16px;font-size:12px;color:#fff;font-weight:bold;text-align:left;">PO-Date</div>
<div style="position:absolute;left:865px;top:252px;width:17px;height:17px;background:linear-gradient(#ffffff,#e9edf2);border:1px solid #d6dbe1"></div>
<svg style="position:absolute;left:866px;top:253px" width="16" height="15" viewBox="0 0 16 15"><path d="M4 5.5 H12 L8 10.5 Z" fill="#595959"/></svg>
<div class="t" style="left:886.00px;top:254.14px;width:400px;height:16px;line-height:16px;font-size:12px;color:#fff;font-weight:bold;text-align:left;">Item Code</div>
<div style="position:absolute;left:965px;top:252px;width:17px;height:17px;background:linear-gradient(#ffffff,#e9edf2);border:1px solid #d6dbe1"></div>
<svg style="position:absolute;left:966px;top:253px" width="16" height="15" viewBox="0 0 16 15"><path d="M4 5.5 H12 L8 10.5 Z" fill="#595959"/></svg>
<div class="t" style="left:986.00px;top:254.14px;width:400px;height:16px;line-height:16px;font-size:12px;color:#fff;font-weight:bold;text-align:left;">Vendor Name</div>
<div style="position:absolute;left:1083px;top:252px;width:17px;height:17px;background:linear-gradient(#ffffff,#e9edf2);border:1px solid #d6dbe1"></div>
<svg style="position:absolute;left:1084px;top:253px" width="16" height="15" viewBox="0 0 16 15"><path d="M4 5.5 H12 L8 10.5 Z" fill="#595959"/></svg>
<div class="t" style="left:1104.00px;top:254.14px;width:400px;height:16px;line-height:16px;font-size:12px;color:#fff;font-weight:bold;text-align:left;">PO-Status</div>
<div style="position:absolute;left:1182px;top:252px;width:17px;height:17px;background:linear-gradient(#ffffff,#e9edf2);border:1px solid #d6dbe1"></div>
<svg style="position:absolute;left:1183px;top:253px" width="16" height="15" viewBox="0 0 16 15"><path d="M4 5.5 H12 L8 10.5 Z" fill="#595959"/></svg>
<div class="t" style="left:1203.00px;top:254.14px;width:400px;height:16px;line-height:16px;font-size:12px;color:#fff;font-weight:bold;text-align:left;">Required date</div>
<div style="position:absolute;left:1296px;top:252px;width:17px;height:17px;background:linear-gradient(#ffffff,#e9edf2);border:1px solid #d6dbe1"></div>
<svg style="position:absolute;left:1297px;top:253px" width="16" height="15" viewBox="0 0 16 15"><path d="M4 5.5 H12 L8 10.5 Z" fill="#595959"/></svg>
<div class="t" style="left:1316.00px;top:254.14px;width:400px;height:16px;line-height:16px;font-size:12px;color:#fff;font-weight:bold;text-align:left;">Received date</div>
<div style="position:absolute;left:1410px;top:252px;width:17px;height:17px;background:linear-gradient(#ffffff,#e9edf2);border:1px solid #d6dbe1"></div>
<svg style="position:absolute;left:1411px;top:253px" width="16" height="15" viewBox="0 0 16 15"><path d="M4 5.5 H12 L8 10.5 Z" fill="#595959"/></svg>
<div class="t" style="left:1430.00px;top:254.14px;width:400px;height:16px;line-height:16px;font-size:12px;color:#fff;font-weight:bold;text-align:left;">Meet date?</div>
<div style="position:absolute;left:1509px;top:252px;width:17px;height:17px;background:linear-gradient(#ffffff,#e9edf2);border:1px solid #d6dbe1"></div>
<svg style="position:absolute;left:1510px;top:253px" width="16" height="15" viewBox="0 0 16 15"><path d="M4 5.5 H12 L8 10.5 Z" fill="#595959"/></svg>
<div class="t" style="left:1530.00px;top:254.14px;width:400px;height:16px;line-height:16px;font-size:12px;color:#fff;font-weight:bold;text-align:left;">Order quantity</div>
<div class="t" style="left:1632.00px;top:254.14px;width:400px;height:16px;line-height:16px;font-size:12px;color:#fff;font-weight:bold;text-align:left;">Item Unit Price</div>
<div class="t" style="left:1734.00px;top:254.14px;width:400px;height:16px;line-height:16px;font-size:12px;color:#fff;font-weight:bold;text-align:left;">Total Item Cost</div>
<div class="t" style="left:1836.00px;top:254.14px;width:400px;height:16px;line-height:16px;font-size:11.85px;color:#fff;font-weight:bold;text-align:left;">PO-Cycle (days)</div>
<div style="position:absolute;left:682px;top:269px;width:106px;height:348px;background:#d9d9d9"></div>
<div style="position:absolute;left:1101px;top:269px;width:99px;height:23px;background:#ffeb9c"></div>
<div style="position:absolute;left:1101px;top:292px;width:99px;height:18px;background:#c6efce"></div>
<div style="position:absolute;left:682px;top:309px;width:106px;height:2px;background:#ededed"></div>
<div style="position:absolute;left:1101px;top:310px;width:99px;height:18.5px;background:#ffeb9c"></div>
<div style="position:absolute;left:682px;top:327.5px;width:106px;height:2px;background:#ededed"></div>
<div style="position:absolute;left:1101px;top:328.5px;width:99px;height:18.5px;background:#ffeb9c"></div>
<div style="position:absolute;left:682px;top:346px;width:106px;height:2px;background:#ededed"></div>
<div style="position:absolute;left:1101px;top:347px;width:99px;height:18px;background:#a6a6a6"></div>
<div style="position:absolute;left:1101px;top:365px;width:99px;height:18px;background:#c6efce"></div>
<div style="position:absolute;left:1101px;top:383px;width:99px;height:18px;background:#c6efce"></div>
<div style="position:absolute;left:682px;top:400px;width:106px;height:2px;background:#ededed"></div>
<div style="position:absolute;left:1101px;top:401px;width:99px;height:18px;background:#ffeb9c"></div>
<div style="position:absolute;left:682px;top:418px;width:106px;height:2px;background:#ededed"></div>
<div style="position:absolute;left:1101px;top:419px;width:99px;height:18px;background:#ffeb9c"></div>
<div style="position:absolute;left:682px;top:436px;width:106px;height:2px;background:#ededed"></div>
<div style="position:absolute;left:1101px;top:437px;width:99px;height:18px;background:#ffeb9c"></div>
<div style="position:absolute;left:682px;top:454px;width:106px;height:2px;background:#ededed"></div>
<div style="position:absolute;left:1101px;top:455px;width:99px;height:18px;background:#ffc7ce"></div>
<div style="position:absolute;left:682px;top:472px;width:106px;height:2px;background:#ededed"></div>
<div style="position:absolute;left:1101px;top:473px;width:99px;height:18px;background:#ffeb9c"></div>
<div style="position:absolute;left:682px;top:490px;width:106px;height:2px;background:#ededed"></div>
<div style="position:absolute;left:1101px;top:491px;width:99px;height:18px;background:#c6efce"></div>
<div style="position:absolute;left:682px;top:508px;width:106px;height:2px;background:#ededed"></div>
<div style="position:absolute;left:1101px;top:509px;width:99px;height:18px;background:#c6efce"></div>
<div style="position:absolute;left:1101px;top:527px;width:99px;height:18px;background:#c6efce"></div>
<div style="position:absolute;left:1101px;top:545px;width:99px;height:18px;background:#a6a6a6"></div>
<div style="position:absolute;left:682px;top:562px;width:106px;height:2px;background:#ededed"></div>
<div style="position:absolute;left:1101px;top:563px;width:99px;height:18px;background:#c6efce"></div>
<div style="position:absolute;left:682px;top:580px;width:106px;height:2px;background:#ededed"></div>
<div style="position:absolute;left:1101px;top:581px;width:99px;height:18px;background:#c6efce"></div>
<div style="position:absolute;left:682px;top:598px;width:106px;height:2px;background:#ededed"></div>
<div style="position:absolute;left:1101px;top:599px;width:99px;height:18px;background:#ffeb9c"></div>
<div class="t" style="left:682.00px;top:276.35px;width:106px;height:17px;line-height:17px;font-size:12.7px;color:#000;font-weight:bold;text-align:center;">PO-0002</div>
<div class="t" style="left:788.00px;top:276.35px;width:94px;height:17px;line-height:17px;font-size:12.7px;color:#000;font-weight:bold;text-align:center;">12/23/2022</div>
<div class="t" style="left:883.00px;top:275.15px;width:100px;height:18px;line-height:18px;font-size:13px;color:#000;font-weight:normal;text-align:center;">PNA0002</div>
<div class="t" style="left:992.00px;top:276.35px;width:100px;height:17px;line-height:17px;font-size:12.7px;color:#000;font-weight:bold;text-align:center;">Vendor 1</div>
<div class="t" style="left:1101.00px;top:275.15px;width:99px;height:18px;line-height:18px;font-size:13px;color:#9c5700;font-weight:normal;text-align:center;">In-Progress</div>
<div class="t" style="left:1207.00px;top:276.35px;width:100px;height:17px;line-height:17px;font-size:12.7px;color:#000;font-weight:bold;text-align:center;">1/21/2023</div>
<div class="t" style="left:1321.00px;top:275.15px;width:100px;height:18px;line-height:18px;font-size:13px;color:#f4f4f4;font-weight:normal;text-align:center;">(blank)</div>
<div class="t" style="left:1543.00px;top:275.15px;width:80px;height:18px;line-height:18px;font-size:13px;color:#000;font-weight:normal;text-align:right;">29</div>
<div class="t" style="left:1645.00px;top:275.15px;width:80px;height:18px;line-height:18px;font-size:13px;color:#000;font-weight:normal;text-align:right;">40</div>
<div class="t" style="left:1747.00px;top:275.15px;width:80px;height:18px;line-height:18px;font-size:13px;color:#000;font-weight:normal;text-align:right;">1,160</div>
<div class="t" style="left:682.00px;top:294.35px;width:106px;height:17px;line-height:17px;font-size:12.7px;color:#000;font-weight:bold;text-align:center;">PO-0002</div>
<div class="t" style="left:788.00px;top:294.35px;width:94px;height:17px;line-height:17px;font-size:12.7px;color:#000;font-weight:bold;text-align:center;">3/28/2023</div>
<div class="t" style="left:883.00px;top:293.15px;width:100px;height:18px;line-height:18px;font-size:13px;color:#000;font-weight:normal;text-align:center;">PNA0008</div>
<div class="t" style="left:992.00px;top:294.35px;width:100px;height:17px;line-height:17px;font-size:12.7px;color:#000;font-weight:bold;text-align:center;">Vendor 2</div>
<div class="t" style="left:1101.00px;top:293.15px;width:99px;height:18px;line-height:18px;font-size:13px;color:#006100;font-weight:normal;text-align:center;">Received</div>
<div class="t" style="left:1207.00px;top:294.35px;width:100px;height:17px;line-height:17px;font-size:12.7px;color:#000;font-weight:bold;text-align:center;">4/18/2023</div>
<div class="t" style="left:1321.00px;top:293.15px;width:100px;height:18px;line-height:18px;font-size:13px;color:#000;font-weight:normal;text-align:center;">4/15/2023</div>
<div class="t" style="left:1438.00px;top:293.15px;width:80px;height:18px;line-height:18px;font-size:13px;color:#000;font-weight:normal;text-align:center;">Yes</div>
<div class="t" style="left:1543.00px;top:293.15px;width:80px;height:18px;line-height:18px;font-size:13px;color:#000;font-weight:normal;text-align:right;">27</div>
<div class="t" style="left:1645.00px;top:293.15px;width:80px;height:18px;line-height:18px;font-size:13px;color:#000;font-weight:normal;text-align:right;">220</div>
<div class="t" style="left:1747.00px;top:293.15px;width:80px;height:18px;line-height:18px;font-size:13px;color:#000;font-weight:normal;text-align:right;">5,940</div>
<div class="t" style="left:682.00px;top:312.85px;width:106px;height:17px;line-height:17px;font-size:12.7px;color:#000;font-weight:bold;text-align:center;">PO-0008</div>
<div class="t" style="left:788.00px;top:312.85px;width:94px;height:17px;line-height:17px;font-size:12.7px;color:#000;font-weight:bold;text-align:center;">3/8/2023</div>
<div class="t" style="left:883.00px;top:311.65px;width:100px;height:18px;line-height:18px;font-size:13px;color:#000;font-weight:normal;text-align:center;">PNA0004</div>
<div class="t" style="left:992.00px;top:312.85px;width:100px;height:17px;line-height:17px;font-size:12.7px;color:#000;font-weight:bold;text-align:center;">Vendor 4</div>
<div class="t" style="left:1101.00px;top:311.65px;width:99px;height:18px;line-height:18px;font-size:13px;color:#9c5700;font-weight:normal;text-align:center;">In-Progress</div>
<div class="t" style="left:1207.00px;top:312.85px;width:100px;height:17px;line-height:17px;font-size:12.7px;color:#000;font-weight:bold;text-align:center;">4/12/2023</div>
<div class="t" style="left:1321.00px;top:311.65px;width:100px;height:18px;line-height:18px;font-size:13px;color:#f4f4f4;font-weight:normal;text-align:center;">(blank)</div>
<div class="t" style="left:1543.00px;top:311.65px;width:80px;height:18px;line-height:18px;font-size:13px;color:#000;font-weight:normal;text-align:right;">39</div>
<div class="t" style="left:1645.00px;top:311.65px;width:80px;height:18px;line-height:18px;font-size:13px;color:#000;font-weight:normal;text-align:right;">22</div>
<div class="t" style="left:1747.00px;top:311.65px;width:80px;height:18px;line-height:18px;font-size:13px;color:#000;font-weight:normal;text-align:right;">858</div>
<div class="t" style="left:682.00px;top:331.35px;width:106px;height:17px;line-height:17px;font-size:12.7px;color:#000;font-weight:bold;text-align:center;">PO-0009</div>
<div class="t" style="left:788.00px;top:331.35px;width:94px;height:17px;line-height:17px;font-size:12.7px;color:#000;font-weight:bold;text-align:center;">2/4/2023</div>
<div class="t" style="left:883.00px;top:330.15px;width:100px;height:18px;line-height:18px;font-size:13px;color:#000;font-weight:normal;text-align:center;">PNA0009</div>
<div class="t" style="left:992.00px;top:331.35px;width:100px;height:17px;line-height:17px;font-size:12.7px;color:#000;font-weight:bold;text-align:center;">Vendor 4</div>
<div class="t" style="left:1101.00px;top:330.15px;width:99px;height:18px;line-height:18px;font-size:13px;color:#9c5700;font-weight:normal;text-align:center;">In-Progress</div>
<div class="t" style="left:1207.00px;top:331.35px;width:100px;height:17px;line-height:17px;font-size:12.7px;color:#000;font-weight:bold;text-align:center;">3/6/2023</div>
<div class="t" style="left:1321.00px;top:330.15px;width:100px;height:18px;line-height:18px;font-size:13px;color:#f4f4f4;font-weight:normal;text-align:center;">(blank)</div>
<div class="t" style="left:1543.00px;top:330.15px;width:80px;height:18px;line-height:18px;font-size:13px;color:#000;font-weight:normal;text-align:right;">31</div>
<div class="t" style="left:1645.00px;top:330.15px;width:80px;height:18px;line-height:18px;font-size:13px;color:#000;font-weight:normal;text-align:right;">45</div>
<div class="t" style="left:1747.00px;top:330.15px;width:80px;height:18px;line-height:18px;font-size:13px;color:#000;font-weight:normal;text-align:right;">1,395</div>
<div class="t" style="left:682.00px;top:349.35px;width:106px;height:17px;line-height:17px;font-size:12.7px;color:#000;font-weight:bold;text-align:center;">PO-0011</div>
<div class="t" style="left:788.00px;top:349.35px;width:94px;height:17px;line-height:17px;font-size:12.7px;color:#000;font-weight:bold;text-align:center;">12/12/2022</div>
<div class="t" style="left:883.00px;top:348.15px;width:100px;height:18px;line-height:18px;font-size:13px;color:#000;font-weight:normal;text-align:center;">PNA0001</div>
<div class="t" style="left:992.00px;top:349.35px;width:100px;height:17px;line-height:17px;font-size:12.7px;color:#000;font-weight:bold;text-align:center;">Vendor 6</div>
<div class="t" style="left:1101.00px;top:348.15px;width:99px;height:18px;line-height:18px;font-size:13px;color:#ffffff;font-weight:normal;text-align:center;">Hold</div>
<div class="t" style="left:1207.00px;top:349.35px;width:100px;height:17px;line-height:17px;font-size:12.7px;color:#000;font-weight:bold;text-align:center;">12/26/2022</div>
<div class="t" style="left:1321.00px;top:348.15px;width:100px;height:18px;line-height:18px;font-size:13px;color:#f4f4f4;font-weight:normal;text-align:center;">(blank)</div>
<div class="t" style="left:1543.00px;top:348.15px;width:80px;height:18px;line-height:18px;font-size:13px;color:#000;font-weight:normal;text-align:right;">32</div>
<div class="t" style="left:1645.00px;top:348.15px;width:80px;height:18px;line-height:18px;font-size:13px;color:#000;font-weight:normal;text-align:right;">10</div>
<div class="t" style="left:1747.00px;top:348.15px;width:80px;height:18px;line-height:18px;font-size:13px;color:#000;font-weight:normal;text-align:right;">320</div>
<div class="t" style="left:682.00px;top:367.35px;width:106px;height:17px;line-height:17px;font-size:12.7px;color:#000;font-weight:bold;text-align:center;">PO-0011</div>
<div class="t" style="left:788.00px;top:367.35px;width:94px;height:17px;line-height:17px;font-size:12.7px;color:#000;font-weight:bold;text-align:center;">2/6/2023</div>
<div class="t" style="left:883.00px;top:366.15px;width:100px;height:18px;line-height:18px;font-size:13px;color:#000;font-weight:normal;text-align:center;">PNA0001</div>
<div class="t" style="left:992.00px;top:367.35px;width:100px;height:17px;line-height:17px;font-size:12.7px;color:#000;font-weight:bold;text-align:center;">Vendor 6</div>
<div class="t" style="left:1101.00px;top:366.15px;width:99px;height:18px;line-height:18px;font-size:13px;color:#006100;font-weight:normal;text-align:center;">Received</div>
<div class="t" style="left:1207.00px;top:367.35px;width:100px;height:17px;line-height:17px;font-size:12.7px;color:#000;font-weight:bold;text-align:center;">3/8/2023</div>
<div class="t" style="left:1321.00px;top:366.15px;width:100px;height:18px;line-height:18px;font-size:13px;color:#000;font-weight:normal;text-align:center;">3/10/2023</div>
<div class="t" style="left:1438.00px;top:366.15px;width:80px;height:18px;line-height:18px;font-size:13px;color:#9c0006;font-weight:normal;text-align:center;">No</div>
<div class="t" style="left:1543.00px;top:366.15px;width:80px;height:18px;line-height:18px;font-size:13px;color:#000;font-weight:normal;text-align:right;">24</div>
<div class="t" style="left:1645.00px;top:366.15px;width:80px;height:18px;line-height:18px;font-size:13px;color:#000;font-weight:normal;text-align:right;">10</div>
<div class="t" style="left:1747.00px;top:366.15px;width:80px;height:18px;line-height:18px;font-size:13px;color:#000;font-weight:normal;text-align:right;">240</div>
<div class="t" style="left:682.00px;top:385.35px;width:106px;height:17px;line-height:17px;font-size:12.7px;color:#000;font-weight:bold;text-align:center;">PO-0011</div>
<div class="t" style="left:788.00px;top:385.35px;width:94px;height:17px;line-height:17px;font-size:12.7px;color:#000;font-weight:bold;text-align:center;">3/13/2023</div>
<div class="t" style="left:883.00px;top:384.15px;width:100px;height:18px;line-height:18px;font-size:13px;color:#000;font-weight:normal;text-align:center;">PNA0011</div>
<div class="t" style="left:992.00px;top:385.35px;width:100px;height:17px;line-height:17px;font-size:12.7px;color:#000;font-weight:bold;text-align:center;">Vendor 6</div>
<div class="t" style="left:1101.00px;top:384.15px;width:99px;height:18px;line-height:18px;font-size:13px;color:#006100;font-weight:normal;text-align:center;">Received</div>
<div class="t" style="left:1207.00px;top:385.35px;width:100px;height:17px;line-height:17px;font-size:12.7px;color:#000;font-weight:bold;text-align:center;">4/9/2023</div>
<div class="t" style="left:1321.00px;top:384.15px;width:100px;height:18px;line-height:18px;font-size:13px;color:#000;font-weight:normal;text-align:center;">4/9/2023</div>
<div class="t" style="left:1438.00px;top:384.15px;width:80px;height:18px;line-height:18px;font-size:13px;color:#000;font-weight:normal;text-align:center;">Yes</div>
<div class="t" style="left:1543.00px;top:384.15px;width:80px;height:18px;line-height:18px;font-size:13px;color:#000;font-weight:normal;text-align:right;">39</div>
<div class="t" style="left:1645.00px;top:384.15px;width:80px;height:18px;line-height:18px;font-size:13px;color:#000;font-weight:normal;text-align:right;">160</div>
<div class="t" style="left:1747.00px;top:384.15px;width:80px;height:18px;line-height:18px;font-size:13px;color:#000;font-weight:normal;text-align:right;">6,240</div>
<div class="t" style="left:682.00px;top:403.35px;width:106px;height:17px;line-height:17px;font-size:12.7px;color:#000;font-weight:bold;text-align:center;">PO-0012</div>
<div class="t" style="left:788.00px;top:403.35px;width:94px;height:17px;line-height:17px;font-size:12.7px;color:#000;font-weight:bold;text-align:center;">1/20/2023</div>
<div class="t" style="left:883.00px;top:402.15px;width:100px;height:18px;line-height:18px;font-size:13px;color:#000;font-weight:normal;text-align:center;">PNA0002</div>
<div class="t" style="left:992.00px;top:403.35px;width:100px;height:17px;line-height:17px;font-size:12.7px;color:#000;font-weight:bold;text-align:center;">Vendor 7</div>
<div class="t" style="left:1101.00px;top:402.15px;width:99px;height:18px;line-height:18px;font-size:13px;color:#9c5700;font-weight:normal;text-align:center;">In-Progress</div>
<div class="t" style="left:1207.00px;top:403.35px;width:100px;height:17px;line-height:17px;font-size:12.7px;color:#000;font-weight:bold;text-align:center;">2/22/2023</div>
<div class="t" style="left:1321.00px;top:402.15px;width:100px;height:18px;line-height:18px;font-size:13px;color:#f4f4f4;font-weight:normal;text-align:center;">(blank)</div>
<div class="t" style="left:1543.00px;top:402.15px;width:80px;height:18px;line-height:18px;font-size:13px;color:#000;font-weight:normal;text-align:right;">25</div>
<div class="t" style="left:1645.00px;top:402.15px;width:80px;height:18px;line-height:18px;font-size:13px;color:#000;font-weight:normal;text-align:right;">40</div>
<div class="t" style="left:1747.00px;top:402.15px;width:80px;height:18px;line-height:18px;font-size:13px;color:#000;font-weight:normal;text-align:right;">1,000</div>
<div class="t" style="left:682.00px;top:421.35px;width:106px;height:17px;line-height:17px;font-size:12.7px;color:#000;font-weight:bold;text-align:center;">PO-0013</div>
<div class="t" style="left:788.00px;top:421.35px;width:94px;height:17px;line-height:17px;font-size:12.7px;color:#000;font-weight:bold;text-align:center;">2/19/2023</div>
<div class="t" style="left:883.00px;top:420.15px;width:100px;height:18px;line-height:18px;font-size:13px;color:#000;font-weight:normal;text-align:center;">PNA0008</div>
<div class="t" style="left:992.00px;top:421.35px;width:100px;height:17px;line-height:17px;font-size:12.7px;color:#000;font-weight:bold;text-align:center;">Vendor 2</div>
<div class="t" style="left:1101.00px;top:420.15px;width:99px;height:18px;line-height:18px;font-size:13px;color:#9c5700;font-weight:normal;text-align:center;">In-Progress</div>
<div class="t" style="left:1207.00px;top:421.35px;width:100px;height:17px;line-height:17px;font-size:12.7px;color:#000;font-weight:bold;text-align:center;">3/20/2023</div>
<div class="t" style="left:1321.00px;top:420.15px;width:100px;height:18px;line-height:18px;font-size:13px;color:#f4f4f4;font-weight:normal;text-align:center;">(blank)</div>
<div class="t" style="left:1543.00px;top:420.15px;width:80px;height:18px;line-height:18px;font-size:13px;color:#000;font-weight:normal;text-align:right;">49</div>
<div class="t" style="left:1645.00px;top:420.15px;width:80px;height:18px;line-height:18px;font-size:13px;color:#000;font-weight:normal;text-align:right;">220</div>
<div class="t" style="left:1747.00px;top:420.15px;width:80px;height:18px;line-height:18px;font-size:13px;color:#000;font-weight:normal;text-align:right;">10,780</div>
<div class="t" style="left:682.00px;top:439.35px;width:106px;height:17px;line-height:17px;font-size:12.7px;color:#000;font-weight:bold;text-align:center;">PO-0014</div>
<div class="t" style="left:788.00px;top:439.35px;width:94px;height:17px;line-height:17px;font-size:12.7px;color:#000;font-weight:bold;text-align:center;">3/9/2023</div>
<div class="t" style="left:883.00px;top:438.15px;width:100px;height:18px;line-height:18px;font-size:13px;color:#000;font-weight:normal;text-align:center;">PNA0008</div>
<div class="t" style="left:992.00px;top:439.35px;width:100px;height:17px;line-height:17px;font-size:12.7px;color:#000;font-weight:bold;text-align:center;">Vendor 2</div>
<div class="t" style="left:1101.00px;top:438.15px;width:99px;height:18px;line-height:18px;font-size:13px;color:#9c5700;font-weight:normal;text-align:center;">In-Progress</div>
<div class="t" style="left:1207.00px;top:439.35px;width:100px;height:17px;line-height:17px;font-size:12.7px;color:#000;font-weight:bold;text-align:center;">4/1/2023</div>
<div class="t" style="left:1321.00px;top:438.15px;width:100px;height:18px;line-height:18px;font-size:13px;color:#f4f4f4;font-weight:normal;text-align:center;">(blank)</div>
<div class="t" style="left:1543.00px;top:438.15px;width:80px;height:18px;line-height:18px;font-size:13px;color:#000;font-weight:normal;text-align:right;">36</div>
<div class="t" style="left:1645.00px;top:438.15px;width:80px;height:18px;line-height:18px;font-size:13px;color:#000;font-weight:normal;text-align:right;">220</div>
<div class="t" style="left:1747.00px;top:438.15px;width:80px;height:18px;line-height:18px;font-size:13px;color:#000;font-weight:normal;text-align:right;">7,920</div>
<div class="t" style="left:682.00px;top:457.35px;width:106px;height:17px;line-height:17px;font-size:12.7px;color:#000;font-weight:bold;text-align:center;">PO-0015</div>
<div class="t" style="left:788.00px;top:457.35px;width:94px;height:17px;line-height:17px;font-size:12.7px;color:#000;font-weight:bold;text-align:center;">3/19/2023</div>
<div class="t" style="left:883.00px;top:456.15px;width:100px;height:18px;line-height:18px;font-size:13px;color:#000;font-weight:normal;text-align:center;">PNA0011</div>
<div class="t" style="left:992.00px;top:457.35px;width:100px;height:17px;line-height:17px;font-size:12.7px;color:#000;font-weight:bold;text-align:center;">Vendor 7</div>
<div class="t" style="left:1101.00px;top:456.15px;width:99px;height:18px;line-height:18px;font-size:13px;color:#9c0006;font-weight:normal;text-align:center;">Canceled</div>
<div class="t" style="left:1207.00px;top:457.35px;width:100px;height:17px;line-height:17px;font-size:12.7px;color:#000;font-weight:bold;text-align:center;">4/17/2023</div>
<div class="t" style="left:1321.00px;top:456.15px;width:100px;height:18px;line-height:18px;font-size:13px;color:#f4f4f4;font-weight:normal;text-align:center;">(blank)</div>
<div class="t" style="left:1543.00px;top:456.15px;width:80px;height:18px;line-height:18px;font-size:13px;color:#000;font-weight:normal;text-align:right;">31</div>
<div class="t" style="left:1645.00px;top:456.15px;width:80px;height:18px;line-height:18px;font-size:13px;color:#000;font-weight:normal;text-align:right;">160</div>
<div class="t" style="left:1747.00px;top:456.15px;width:80px;height:18px;line-height:18px;font-size:13px;color:#000;font-weight:normal;text-align:right;">4,960</div>
<div class="t" style="left:682.00px;top:475.35px;width:106px;height:17px;line-height:17px;font-size:12.7px;color:#000;font-weight:bold;text-align:center;">PO-0016</div>
<div class="t" style="left:788.00px;top:475.35px;width:94px;height:17px;line-height:17px;font-size:12.7px;color:#000;font-weight:bold;text-align:center;">1/16/2023</div>
<div class="t" style="left:883.00px;top:474.15px;width:100px;height:18px;line-height:18px;font-size:13px;color:#000;font-weight:normal;text-align:center;">PNA0002</div>
<div class="t" style="left:992.00px;top:475.35px;width:100px;height:17px;line-height:17px;font-size:12.7px;color:#000;font-weight:bold;text-align:center;">Vendor 2</div>
<div class="t" style="left:1101.00px;top:474.15px;width:99px;height:18px;line-height:18px;font-size:13px;color:#9c5700;font-weight:normal;text-align:center;">In-Progress</div>
<div class="t" style="left:1207.00px;top:475.35px;width:100px;height:17px;line-height:17px;font-size:12.7px;color:#000;font-weight:bold;text-align:center;">2/8/2023</div>
<div class="t" style="left:1321.00px;top:474.15px;width:100px;height:18px;line-height:18px;font-size:13px;color:#f4f4f4;font-weight:normal;text-align:center;">(blank)</div>
<div class="t" style="left:1543.00px;top:474.15px;width:80px;height:18px;line-height:18px;font-size:13px;color:#000;font-weight:normal;text-align:right;">44</div>
<div class="t" style="left:1645.00px;top:474.15px;width:80px;height:18px;line-height:18px;font-size:13px;color:#000;font-weight:normal;text-align:right;">40</div>
<div class="t" style="left:1747.00px;top:474.15px;width:80px;height:18px;line-height:18px;font-size:13px;color:#000;font-weight:normal;text-align:right;">1,760</div>
<div class="t" style="left:682.00px;top:493.35px;width:106px;height:17px;line-height:17px;font-size:12.7px;color:#000;font-weight:bold;text-align:center;">PO-0021</div>
<div class="t" style="left:788.00px;top:493.35px;width:94px;height:17px;line-height:17px;font-size:12.7px;color:#000;font-weight:bold;text-align:center;">1/17/2023</div>
<div class="t" style="left:883.00px;top:492.15px;width:100px;height:18px;line-height:18px;font-size:13px;color:#000;font-weight:normal;text-align:center;">PNA0011</div>
<div class="t" style="left:992.00px;top:493.35px;width:100px;height:17px;line-height:17px;font-size:12.7px;color:#000;font-weight:bold;text-align:center;">Vendor 6</div>
<div class="t" style="left:1101.00px;top:492.15px;width:99px;height:18px;line-height:18px;font-size:13px;color:#006100;font-weight:normal;text-align:center;">Received</div>
<div class="t" style="left:1207.00px;top:493.35px;width:100px;height:17px;line-height:17px;font-size:12.7px;color:#000;font-weight:bold;text-align:center;">2/5/2023</div>
<div class="t" style="left:1321.00px;top:492.15px;width:100px;height:18px;line-height:18px;font-size:13px;color:#000;font-weight:normal;text-align:center;">2/10/2023</div>
<div class="t" style="left:1438.00px;top:492.15px;width:80px;height:18px;line-height:18px;font-size:13px;color:#9c0006;font-weight:normal;text-align:center;">No</div>
<div class="t" style="left:1543.00px;top:492.15px;width:80px;height:18px;line-height:18px;font-size:13px;color:#000;font-weight:normal;text-align:right;">49</div>
<div class="t" style="left:1645.00px;top:492.15px;width:80px;height:18px;line-height:18px;font-size:13px;color:#000;font-weight:normal;text-align:right;">160</div>
<div class="t" style="left:1747.00px;top:492.15px;width:80px;height:18px;line-height:18px;font-size:13px;color:#000;font-weight:normal;text-align:right;">7,840</div>
<div class="t" style="left:682.00px;top:511.35px;width:106px;height:17px;line-height:17px;font-size:12.7px;color:#000;font-weight:bold;text-align:center;">PO-0022</div>
<div class="t" style="left:788.00px;top:511.35px;width:94px;height:17px;line-height:17px;font-size:12.7px;color:#000;font-weight:bold;text-align:center;">1/31/2023</div>
<div class="t" style="left:883.00px;top:510.15px;width:100px;height:18px;line-height:18px;font-size:13px;color:#000;font-weight:normal;text-align:center;">PNA0011</div>
<div class="t" style="left:992.00px;top:511.35px;width:100px;height:17px;line-height:17px;font-size:12.7px;color:#000;font-weight:bold;text-align:center;">Vendor 1</div>
<div class="t" style="left:1101.00px;top:510.15px;width:99px;height:18px;line-height:18px;font-size:13px;color:#006100;font-weight:normal;text-align:center;">Received</div>
<div class="t" style="left:1207.00px;top:511.35px;width:100px;height:17px;line-height:17px;font-size:12.7px;color:#000;font-weight:bold;text-align:center;">2/28/2023</div>
<div class="t" style="left:1321.00px;top:510.15px;width:100px;height:18px;line-height:18px;font-size:13px;color:#000;font-weight:normal;text-align:center;">2/25/2023</div>
<div class="t" style="left:1438.00px;top:510.15px;width:80px;height:18px;line-height:18px;font-size:13px;color:#000;font-weight:normal;text-align:center;">Yes</div>
<div class="t" style="left:1543.00px;top:510.15px;width:80px;height:18px;line-height:18px;font-size:13px;color:#000;font-weight:normal;text-align:right;">34</div>
<div class="t" style="left:1645.00px;top:510.15px;width:80px;height:18px;line-height:18px;font-size:13px;color:#000;font-weight:normal;text-align:right;">160</div>
<div class="t" style="left:1747.00px;top:510.15px;width:80px;height:18px;line-height:18px;font-size:13px;color:#000;font-weight:normal;text-align:right;">5,440</div>
<div class="t" style="left:682.00px;top:529.35px;width:106px;height:17px;line-height:17px;font-size:12.7px;color:#000;font-weight:bold;text-align:center;">PO-0022</div>
<div class="t" style="left:788.00px;top:529.35px;width:94px;height:17px;line-height:17px;font-size:12.7px;color:#000;font-weight:bold;text-align:center;">2/21/2023</div>
<div class="t" style="left:883.00px;top:528.15px;width:100px;height:18px;line-height:18px;font-size:13px;color:#000;font-weight:normal;text-align:center;">PNA0008</div>
<div class="t" style="left:992.00px;top:529.35px;width:100px;height:17px;line-height:17px;font-size:12.7px;color:#000;font-weight:bold;text-align:center;">Vendor 1</div>
<div class="t" style="left:1101.00px;top:528.15px;width:99px;height:18px;line-height:18px;font-size:13px;color:#006100;font-weight:normal;text-align:center;">Received</div>
<div class="t" style="left:1207.00px;top:529.35px;width:100px;height:17px;line-height:17px;font-size:12.7px;color:#000;font-weight:bold;text-align:center;">3/23/2023</div>
<div class="t" style="left:1321.00px;top:528.15px;width:100px;height:18px;line-height:18px;font-size:13px;color:#000;font-weight:normal;text-align:center;">3/25/2023</div>
<div class="t" style="left:1438.00px;top:528.15px;width:80px;height:18px;line-height:18px;font-size:13px;color:#9c0006;font-weight:normal;text-align:center;">No</div>
<div class="t" style="left:1543.00px;top:528.15px;width:80px;height:18px;line-height:18px;font-size:13px;color:#000;font-weight:normal;text-align:right;">22</div>
<div class="t" style="left:1645.00px;top:528.15px;width:80px;height:18px;line-height:18px;font-size:13px;color:#000;font-weight:normal;text-align:right;">220</div>
<div class="t" style="left:1747.00px;top:528.15px;width:80px;height:18px;line-height:18px;font-size:13px;color:#000;font-weight:normal;text-align:right;">4,840</div>
<div class="t" style="left:682.00px;top:547.35px;width:106px;height:17px;line-height:17px;font-size:12.7px;color:#000;font-weight:bold;text-align:center;">PO-0022</div>
<div class="t" style="left:788.00px;top:547.35px;width:94px;height:17px;line-height:17px;font-size:12.7px;color:#000;font-weight:bold;text-align:center;">4/15/2023</div>
<div class="t" style="left:883.00px;top:546.15px;width:100px;height:18px;line-height:18px;font-size:13px;color:#000;font-weight:normal;text-align:center;">PNA0008</div>
<div class="t" style="left:992.00px;top:547.35px;width:100px;height:17px;line-height:17px;font-size:12.7px;color:#000;font-weight:bold;text-align:center;">Vendor 2</div>
<div class="t" style="left:1101.00px;top:546.15px;width:99px;height:18px;line-height:18px;font-size:13px;color:#ffffff;font-weight:normal;text-align:center;">Hold</div>
<div class="t" style="left:1207.00px;top:547.35px;width:100px;height:17px;line-height:17px;font-size:12.7px;color:#000;font-weight:bold;text-align:center;">5/1/2023</div>
<div class="t" style="left:1321.00px;top:546.15px;width:100px;height:18px;line-height:18px;font-size:13px;color:#f4f4f4;font-weight:normal;text-align:center;">(blank)</div>
<div class="t" style="left:1543.00px;top:546.15px;width:80px;height:18px;line-height:18px;font-size:13px;color:#000;font-weight:normal;text-align:right;">46</div>
<div class="t" style="left:1645.00px;top:546.15px;width:80px;height:18px;line-height:18px;font-size:13px;color:#000;font-weight:normal;text-align:right;">220</div>
<div class="t" style="left:1747.00px;top:546.15px;width:80px;height:18px;line-height:18px;font-size:13px;color:#000;font-weight:normal;text-align:right;">10,120</div>
<div class="t" style="left:682.00px;top:565.35px;width:106px;height:17px;line-height:17px;font-size:12.7px;color:#000;font-weight:bold;text-align:center;">PO-0025</div>
<div class="t" style="left:788.00px;top:565.35px;width:94px;height:17px;line-height:17px;font-size:12.7px;color:#000;font-weight:bold;text-align:center;">2/14/2023</div>
<div class="t" style="left:883.00px;top:564.15px;width:100px;height:18px;line-height:18px;font-size:13px;color:#000;font-weight:normal;text-align:center;">PNA0009</div>
<div class="t" style="left:992.00px;top:565.35px;width:100px;height:17px;line-height:17px;font-size:12.7px;color:#000;font-weight:bold;text-align:center;">Vendor 7</div>
<div class="t" style="left:1101.00px;top:564.15px;width:99px;height:18px;line-height:18px;font-size:13px;color:#006100;font-weight:normal;text-align:center;">Received</div>
<div class="t" style="left:1207.00px;top:565.35px;width:100px;height:17px;line-height:17px;font-size:12.7px;color:#000;font-weight:bold;text-align:center;">3/15/2023</div>
<div class="t" style="left:1321.00px;top:564.15px;width:100px;height:18px;line-height:18px;font-size:13px;color:#000;font-weight:normal;text-align:center;">3/12/2023</div>
<div class="t" style="left:1438.00px;top:564.15px;width:80px;height:18px;line-height:18px;font-size:13px;color:#000;font-weight:normal;text-align:center;">Yes</div>
<div class="t" style="left:1543.00px;top:564.15px;width:80px;height:18px;line-height:18px;font-size:13px;color:#000;font-weight:normal;text-align:right;">37</div>
<div class="t" style="left:1645.00px;top:564.15px;width:80px;height:18px;line-height:18px;font-size:13px;color:#000;font-weight:normal;text-align:right;">45</div>
<div class="t" style="left:1747.00px;top:564.15px;width:80px;height:18px;line-height:18px;font-size:13px;color:#000;font-weight:normal;text-align:right;">1,665</div>
<div class="t" style="left:682.00px;top:583.35px;width:106px;height:17px;line-height:17px;font-size:12.7px;color:#000;font-weight:bold;text-align:center;">PO-0026</div>
<div class="t" style="left:788.00px;top:583.35px;width:94px;height:17px;line-height:17px;font-size:12.7px;color:#000;font-weight:bold;text-align:center;">11/7/2023</div>
<div class="t" style="left:883.00px;top:582.15px;width:100px;height:18px;line-height:18px;font-size:13px;color:#000;font-weight:normal;text-align:center;">PNA0009</div>
<div class="t" style="left:992.00px;top:583.35px;width:100px;height:17px;line-height:17px;font-size:12.7px;color:#000;font-weight:bold;text-align:center;">Vendor 2</div>
<div class="t" style="left:1101.00px;top:582.15px;width:99px;height:18px;line-height:18px;font-size:13px;color:#006100;font-weight:normal;text-align:center;">Received</div>
<div class="t" style="left:1207.00px;top:583.35px;width:100px;height:17px;line-height:17px;font-size:12.7px;color:#000;font-weight:bold;text-align:center;">12/5/2022</div>
<div class="t" style="left:1321.00px;top:582.15px;width:100px;height:18px;line-height:18px;font-size:13px;color:#000;font-weight:normal;text-align:center;">12/1/2022</div>
<div class="t" style="left:1438.00px;top:582.15px;width:80px;height:18px;line-height:18px;font-size:13px;color:#000;font-weight:normal;text-align:center;">Yes</div>
<div class="t" style="left:1543.00px;top:582.15px;width:80px;height:18px;line-height:18px;font-size:13px;color:#000;font-weight:normal;text-align:right;">48</div>
<div class="t" style="left:1645.00px;top:582.15px;width:80px;height:18px;line-height:18px;font-size:13px;color:#000;font-weight:normal;text-align:right;">45</div>
<div class="t" style="left:1747.00px;top:582.15px;width:80px;height:18px;line-height:18px;font-size:13px;color:#000;font-weight:normal;text-align:right;">2,160</div>
<div class="t" style="left:682.00px;top:601.35px;width:106px;height:17px;line-height:17px;font-size:12.7px;color:#000;font-weight:bold;text-align:center;">PO-0027</div>
<div class="t" style="left:788.00px;top:601.35px;width:94px;height:17px;line-height:17px;font-size:12.7px;color:#000;font-weight:bold;text-align:center;">11/6/2023</div>
<div class="t" style="left:883.00px;top:600.15px;width:100px;height:18px;line-height:18px;font-size:13px;color:#000;font-weight:normal;text-align:center;">PNA0006</div>
<div class="t" style="left:992.00px;top:601.35px;width:100px;height:17px;line-height:17px;font-size:12.7px;color:#000;font-weight:bold;text-align:center;">Vendor 6</div>
<div class="t" style="left:1101.00px;top:600.15px;width:99px;height:18px;line-height:18px;font-size:13px;color:#9c5700;font-weight:normal;text-align:center;">In-Progress</div>
<div class="t" style="left:1207.00px;top:601.35px;width:100px;height:17px;line-height:17px;font-size:12.7px;color:#000;font-weight:bold;text-align:center;">11/20/2023</div>
<div class="t" style="left:1321.00px;top:600.15px;width:100px;height:18px;line-height:18px;font-size:13px;color:#f4f4f4;font-weight:normal;text-align:center;">(blank)</div>
<div class="t" style="left:1543.00px;top:600.15px;width:80px;height:18px;line-height:18px;font-size:13px;color:#000;font-weight:normal;text-align:right;">3</div>
<div class="t" style="left:1645.00px;top:600.15px;width:80px;height:18px;line-height:18px;font-size:13px;color:#000;font-weight:normal;text-align:right;">50</div>
<div class="t" style="left:1747.00px;top:600.15px;width:80px;height:18px;line-height:18px;font-size:13px;color:#000;font-weight:normal;text-align:right;">150</div>
<div style="position:absolute;left:682px;top:617px;width:1211px;height:17px;background:#404040"></div>
<div style="position:absolute;left:680px;top:634px;width:1213px;height:2px;background:#808080"></div>
<div class="t" style="left:698.00px;top:618.65px;width:400px;height:18px;line-height:18px;font-size:13.3px;color:#fff;font-weight:bold;text-align:left;">Grand Total</div>
<div class="t" style="left:1543.00px;top:619.15px;width:80px;height:17px;line-height:17px;font-size:12.7px;color:#fff;font-weight:bold;text-align:right;">645</div>
<div class="t" style="left:1645.00px;top:619.15px;width:80px;height:17px;line-height:17px;font-size:12.7px;color:#fff;font-weight:bold;text-align:right;">2,087</div>
<div class="t" style="left:1747.00px;top:619.15px;width:80px;height:17px;line-height:17px;font-size:12.7px;color:#fff;font-weight:bold;text-align:right;">74,788</div>
<div style="position:absolute;left:1893px;top:30px;width:1px;height:951px;background:#dadada"></div>
<div style="position:absolute;left:1894px;top:30px;width:23px;height:951px;background:#f0f0f0"></div>
<div style="position:absolute;left:1897px;top:32px;width:20px;height:946px;background:#f5f5f5;border-radius:10px"></div>
<svg style="position:absolute;left:1900px;top:33px" width="15" height="12" viewBox="0 0 15 12"><path d="M7.5 2 L13 10.5 H2 Z" fill="#6e6e6e" stroke="#6e6e6e" stroke-width="1" stroke-linejoin="round"/></svg>
<div style="position:absolute;left:1902px;top:50px;width:11px;height:164px;background:#707070;border-radius:6px"></div>
<svg style="position:absolute;left:1900px;top:966px" width="15" height="12" viewBox="0 0 15 12"><path d="M7.5 10 L13 1.5 H2 Z" fill="#6e6e6e" stroke="#6e6e6e" stroke-width="1" stroke-linejoin="round"/></svg>
</body></html>
